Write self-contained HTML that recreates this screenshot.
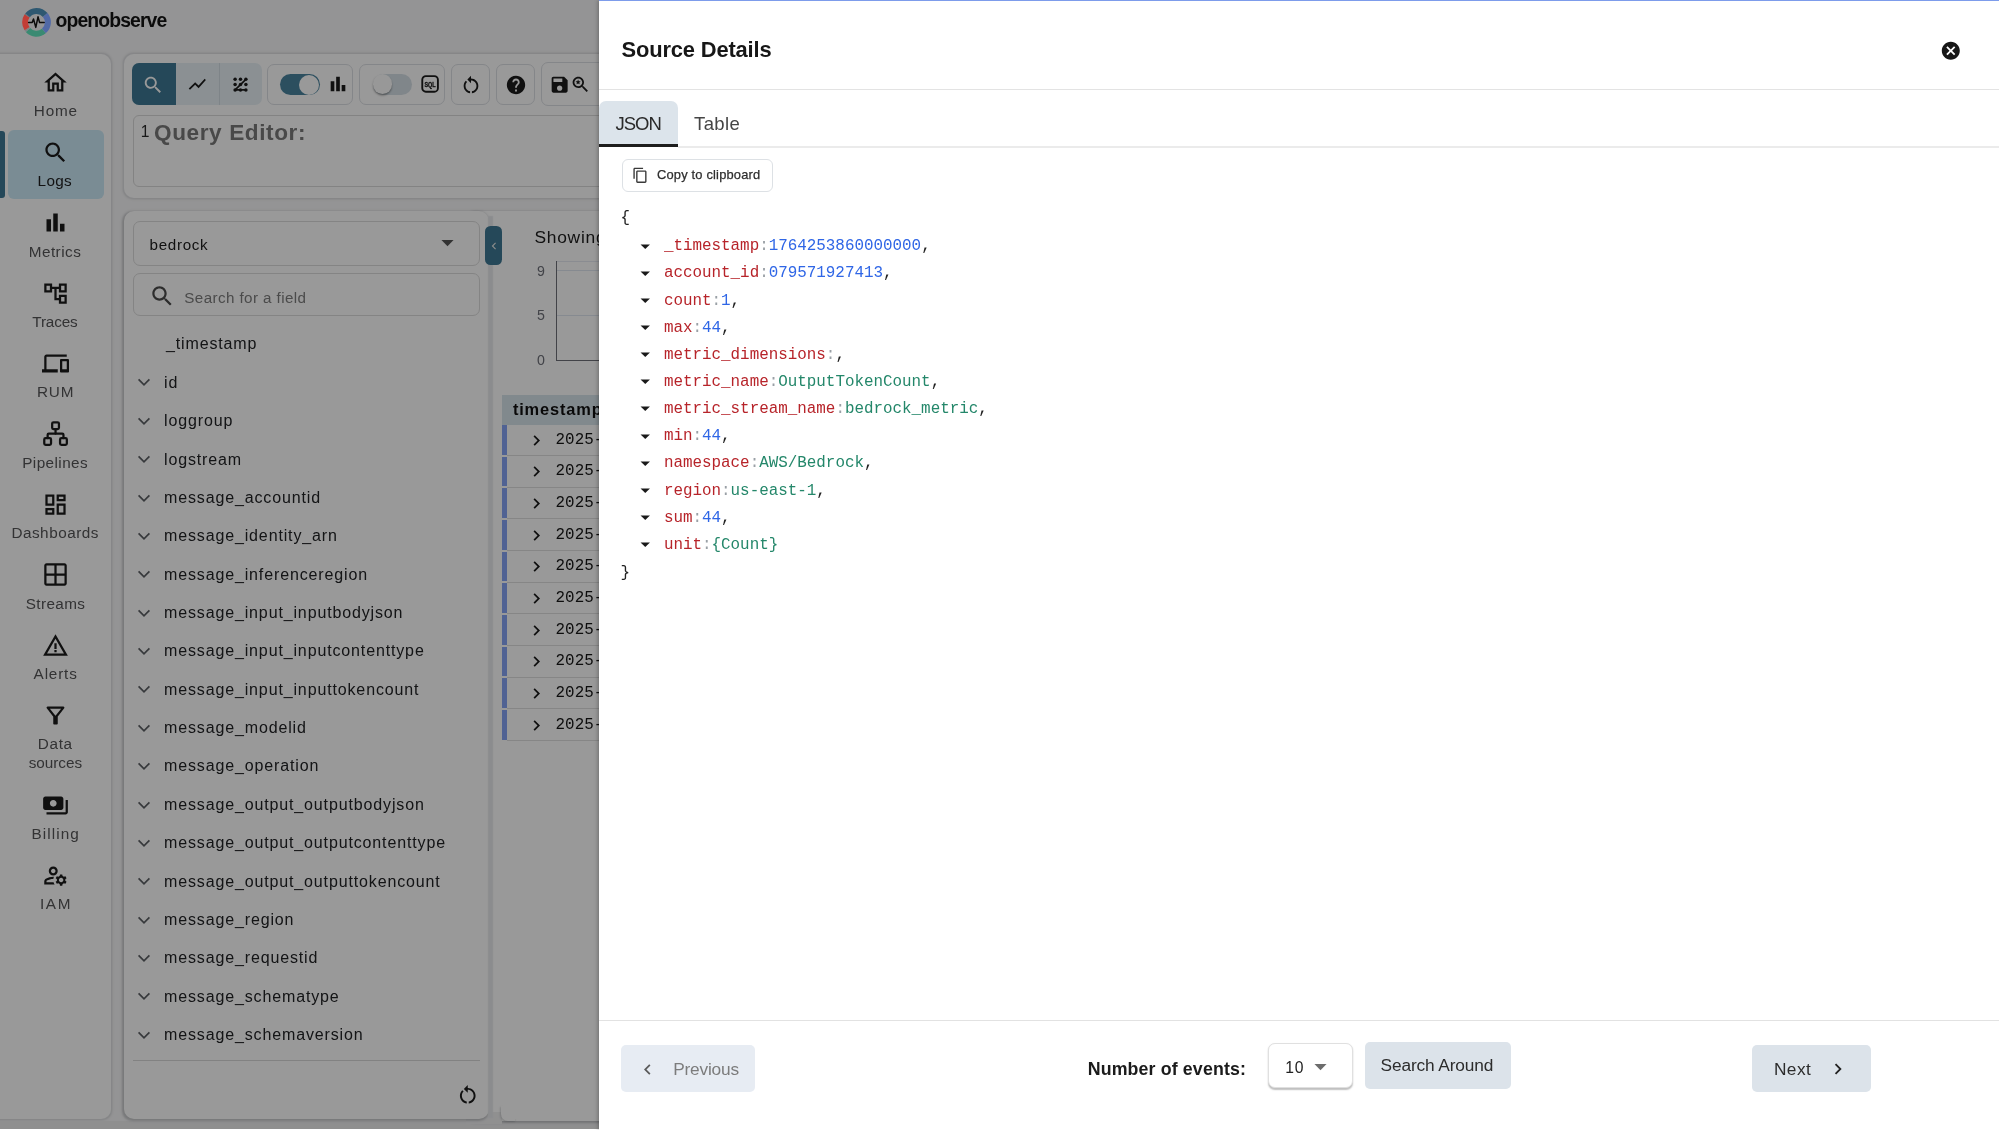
<!DOCTYPE html>
<html lang="en">
<head>
<meta charset="utf-8">
<title>OpenObserve - Source Details</title>
<style>
*{box-sizing:border-box;margin:0;padding:0}
html,body{width:1999px;height:1130px;overflow:hidden;background:#f7f7f8;font-family:"Liberation Sans",sans-serif;color:#1f1f1f}
.abs{position:absolute}
#bg{position:absolute;left:0;top:0;width:1999px;height:1130px;background:#f7f7f8;overflow:hidden}
#ov{position:absolute;left:0;top:0;width:1999px;height:1130px;background:rgba(0,0,0,.4)}
#panel{position:absolute;left:599px;top:0;width:1400px;height:1130px;background:#fff;box-shadow:-1px 0 4px rgba(0,0,0,.28)}
.card{position:absolute;background:#fff;border-radius:10px;}
svg{display:block;position:absolute;overflow:visible}
.t{position:absolute;white-space:nowrap;line-height:1}
#bg,#panel{will-change:transform}
/* json */
.jl{position:absolute;left:664px;font:400 15.88px/1 "Liberation Mono",monospace;white-space:pre;color:#1f1f1f}
.k{color:#b7242a}.s{color:#9aa0a6}.n{color:#2f66e6}.g{color:#24876a}
</style>
</head>
<body>
<div id="bg">
<div class="t" id="logo" style="left:55.50px;top:11.00px;font-size:19.4px;font-weight:700;letter-spacing:-0.891px;color:#151515;">openobserve</div>
<div class="card" style="left:-12px;top:53.5px;width:123px;height:1065px;box-shadow:0 0 0 .6px #e4e5e8,0 0 2.5px 0.6px rgba(60,64,72,.22)"></div>
<div class="abs" style="left:7.8px;top:129.6px;width:95.8px;height:69.3px;border-radius:6px;background:#cbe9f7"></div>
<div class="abs" style="left:0;top:131px;width:4.6px;height:67.3px;background:#3f7994;border-radius:0 3px 3px 0"></div>
<svg viewBox="0 0 24 24" style="left:41.80px;top:68.60px;width:27px;height:27px;fill:#1c1c1c"><path d="M12 5.69l5 4.5V18h-2v-6H9v6H7v-7.81l5-4.5M12 3L2 12h3v8h6v-6h2v6h6v-8h3L12 3z"/></svg>
<div class="t" style="left:33.80px;top:102.90px;font-size:15.3px;font-weight:400;letter-spacing:0.834px;color:#555557;">Home</div>
<svg viewBox="0 0 24 24" style="left:41.80px;top:138.90px;width:27px;height:27px;fill:#1c1c1c"><path d="M15.5 14h-.79l-.28-.27C15.41 12.59 16 11.11 16 9.5 16 5.91 13.09 3 9.5 3S3 5.91 3 9.5 5.91 16 9.5 16c1.61 0 3.09-.59 4.23-1.57l.27.28v.79l5 4.99L20.49 19l-4.99-5zm-6 0C7.01 14 5 11.99 5 9.5S7.01 5 9.5 5 14 7.01 14 9.5 11.99 14 9.5 14z"/></svg>
<div class="t" style="left:37.60px;top:173.20px;font-size:15.3px;font-weight:400;letter-spacing:0.293px;color:#1e1e1e;">Logs</div>
<svg viewBox="0 0 24 24" style="left:41.80px;top:209.30px;width:27px;height:27px;fill:#1c1c1c"><path d="M4 9h4v11H4zm12 4h4v7h-4zm-6-9h4v16h-4z"/></svg>
<div class="t" style="left:28.70px;top:243.60px;font-size:15.3px;font-weight:400;letter-spacing:0.477px;color:#555557;">Metrics</div>
<svg viewBox="0 0 24 24" style="left:41.80px;top:279.70px;width:27px;height:27px;fill:#1c1c1c"><path d="M22 11V3h-7v3H9V3H2v8h7V8h2v10h4v3h7v-8h-7v3h-2V8h2v3h7zM7 9H4V5h3v4zm10 6h3v4h-3v-4zm0-10h3v4h-3V5z"/></svg>
<div class="t" style="left:32.30px;top:314.00px;font-size:15.3px;font-weight:400;letter-spacing:-0.147px;color:#555557;">Traces</div>
<svg viewBox="0 0 24 24" style="left:41.80px;top:350.10px;width:27px;height:27px;fill:#1c1c1c"><path d="M4 6h18V4H4c-1.1 0-2 .9-2 2v11H0v3h14v-3H4V6zm19 2h-6c-.55 0-1 .45-1 1v10c0 .55.45 1 1 1h6c.55 0 1-.45 1-1V9c0-.55-.45-1-1-1zm-1 9h-4v-7h4v7z"/></svg>
<div class="t" style="left:37.00px;top:384.40px;font-size:15.3px;font-weight:400;letter-spacing:0.803px;color:#555557;">RUM</div>
<svg viewBox="0 0 24 24" style="left:41.95px;top:420.45px;width:27.1px;height:27.1px;fill:none;stroke:#1c1c1c;stroke-width:2;stroke-linecap:round;stroke-linejoin:round"><rect x="16" y="16" width="6" height="6" rx="1.2"/><rect x="2" y="16" width="6" height="6" rx="1.2"/><rect x="9" y="2" width="6" height="6" rx="1.2"/><path d="M5 16v-3a1 1 0 0 1 1-1h12a1 1 0 0 1 1 1v3"/><path d="M12 12V8"/></svg>
<div class="t" style="left:22.20px;top:454.80px;font-size:15.3px;font-weight:400;letter-spacing:0.422px;color:#555557;">Pipelines</div>
<svg viewBox="0 0 24 24" style="left:41.80px;top:490.90px;width:27px;height:27px;fill:#1c1c1c"><path d="M19 5v2h-4V5h4M9 5v6H5V5h4m10 8v6h-4v-6h4M9 17v2H5v-2h4M21 3h-8v6h8V3zM11 3H3v10h8V3zm10 8h-8v10h8V11zm-10 4H3v6h8v-6z"/></svg>
<div class="t" style="left:11.40px;top:525.20px;font-size:15.3px;font-weight:400;letter-spacing:0.507px;color:#555557;">Dashboards</div>
<svg viewBox="0 0 24 24" style="left:41.80px;top:561.30px;width:27px;height:27px;fill:#1c1c1c"><path d="M20 2H4c-1.1 0-2 .9-2 2v16c0 1.1.9 2 2 2h16c1.1 0 2-.9 2-2V4c0-1.1-.9-2-2-2zm0 9h-7V4h7v7zm-9-7v7H4V4h7zm-7 9h7v7H4v-7zm9 7v-7h7v7h-7z"/></svg>
<div class="t" style="left:25.80px;top:595.60px;font-size:15.3px;font-weight:400;letter-spacing:0.366px;color:#555557;">Streams</div>
<svg viewBox="0 0 24 24" style="left:41.80px;top:631.70px;width:27px;height:27px;fill:#1c1c1c"><path d="M12 5.99L19.53 19H4.47L12 5.99M12 2L1 21h22L12 2zm1 14h-2v2h2v-2zm0-6h-2v5h2v-5z"/></svg>
<div class="t" style="left:33.60px;top:666.00px;font-size:15.3px;font-weight:400;letter-spacing:0.829px;color:#555557;">Alerts</div>
<svg viewBox="0 0 24 24" style="left:41.80px;top:702.10px;width:27px;height:27px;fill:#1c1c1c"><path d="M7 6h10l-5.01 6.3L7 6zm-2.75-.39C6.27 8.2 10 13 10 13v6c0 .55.45 1 1 1h2c.55 0 1-.45 1-1v-6s3.72-4.8 5.74-7.39c.51-.66.04-1.61-.79-1.61H5.04c-.83 0-1.3.95-.79 1.61z"/></svg>
<div class="t" style="left:37.70px;top:736.40px;font-size:15.3px;font-weight:400;letter-spacing:0.699px;color:#555557;">Data</div>
<div class="t" style="left:28.70px;top:755.40px;font-size:15.3px;font-weight:400;letter-spacing:-0.036px;color:#555557;">sources</div>
<svg viewBox="0 0 24 24" style="left:41.80px;top:791.50px;width:27px;height:27px;fill:#1c1c1c"><path d="M19 14V6c0-1.1-.9-2-2-2H3c-1.1 0-2 .9-2 2v8c0 1.1.9 2 2 2h14c1.1 0 2-.9 2-2zm-9-1c-1.66 0-3-1.34-3-3s1.34-3 3-3 3 1.34 3 3-1.34 3-3 3zm13-6v11c0 1.1-.9 2-2 2H4v-2h17V7h2z"/></svg>
<div class="t" style="left:31.50px;top:825.80px;font-size:15.3px;font-weight:400;letter-spacing:1.066px;color:#555557;">Billing</div>
<svg viewBox="0 0 24 24" style="left:41.80px;top:861.90px;width:27px;height:27px;fill:#1c1c1c"><path d="M4 18v-.65c0-.34.16-.66.41-.81C6.1 15.53 8.03 15 10 15c.03 0 .05 0 .08.01.1-.7.3-1.37.59-1.98-.22-.02-.44-.03-.67-.03-2.42 0-4.68.67-6.61 1.82-.88.52-1.39 1.5-1.39 2.53V20h9.26c-.42-.6-.75-1.28-.97-2H4zm6-6c2.21 0 4-1.79 4-4s-1.79-4-4-4-4 1.79-4 4 1.79 4 4 4zm0-6c1.1 0 2 .9 2 2s-.9 2-2 2-2-.9-2-2 .9-2 2-2zm10.75 10c0-.22-.03-.42-.06-.63l1.14-1.01-1-1.73-1.45.49c-.32-.27-.68-.48-1.08-.63L18 11h-2l-.3 1.49c-.4.15-.76.36-1.08.63l-1.45-.49-1 1.73 1.14 1.01c-.03.21-.06.41-.06.63s.03.42.06.63l-1.14 1.01 1 1.73 1.45-.49c.32.27.68.48 1.08.63L16 21h2l.3-1.49c.4-.15.76-.36 1.08-.63l1.45.49 1-1.73-1.14-1.01c.03-.21.06-.41.06-.63zM17 18c-1.1 0-2-.9-2-2s.9-2 2-2 2 .9 2 2-.9 2-2 2z"/></svg>
<div class="t" style="left:40.00px;top:896.20px;font-size:15.3px;font-weight:400;letter-spacing:1.624px;color:#555557;">IAM</div>
<div class="card" style="left:123.5px;top:54px;width:1900px;height:143.5px;box-shadow:0 0 0 .6px #e4e5e8,0 0 2.5px 0.6px rgba(60,64,72,.22)"></div>
<div class="abs" style="left:132.4px;top:63.4px;width:129.5px;height:41.8px;border-radius:7px;background:#e8f1f6;overflow:hidden"><div class="abs" style="left:0;top:0;width:43.6px;height:42px;background:#3f7994"></div><div class="abs" style="left:86.3px;top:0;width:1.3px;height:42px;background:#d3dde3"></div></div>
<svg viewBox="0 0 24 24" style="left:142.00px;top:73.80px;width:22.2px;height:22.2px;fill:#ffffff"><path d="M15.5 14h-.79l-.28-.27C15.41 12.59 16 11.11 16 9.5 16 5.91 13.09 3 9.5 3S3 5.91 3 9.5 5.91 16 9.5 16c1.61 0 3.09-.59 4.23-1.57l.27.28v.79l5 4.99L20.49 19l-4.99-5zm-6 0C7.01 14 5 11.99 5 9.5S7.01 5 9.5 5 14 7.01 14 9.5 11.99 14 9.5 14z"/></svg>
<svg viewBox="0 0 24 24" style="left:186.70px;top:74.10px;width:20.6px;height:20.6px;fill:#1c1c1c"><path d="M3.5 18.49l6-6.01 4 4L22 6.92l-1.41-1.41-7.09 7.97-4-4L2 16.99z"/></svg>
<svg viewBox="0 0 300 120" style="left:0;top:0;width:300px;height:120px;fill:#1c1c1c"><circle cx="235.1" cy="79.3" r="1.75"/><circle cx="235.1" cy="84.6" r="1.75"/><circle cx="235.1" cy="89.9" r="1.75"/><circle cx="240.5" cy="79.3" r="1.75"/><circle cx="240.5" cy="84.6" r="1.75"/><circle cx="240.5" cy="89.9" r="1.75"/><circle cx="245.9" cy="79.3" r="1.75"/><circle cx="245.9" cy="84.6" r="1.75"/><circle cx="245.9" cy="89.9" r="1.75"/><path d="M245.9 79.3L235.1 89.9H245.9" stroke="#1c1c1c" stroke-width="1.7" fill="none" stroke-linejoin="round"/></svg>
<div class="abs" style="left:267.3px;top:63.5px;width:85.4px;height:41.4px;border:1.2px solid #dde0e4;border-radius:7px;background:transparent;"></div>
<div class="abs" style="left:280.1px;top:74.2px;width:39.6px;height:21px;border-radius:11px;background:#4a849f"></div>
<div class="abs" style="left:299.1px;top:74.8px;width:19.6px;height:19.8px;border-radius:10px;background:#fff"></div>
<svg viewBox="0 0 24 24" style="left:327.30px;top:72.90px;width:22px;height:22px;fill:#1c1c1c"><path d="M4 9h4v11H4zm12 4h4v7h-4zm-6-9h4v16h-4z"/></svg>
<div class="abs" style="left:359.4px;top:63.5px;width:85.4px;height:41.4px;border:1.2px solid #dde0e4;border-radius:7px;background:transparent;"></div>
<div class="abs" style="left:372.5px;top:74.4px;width:39px;height:20.4px;border-radius:11px;background:#d6e0e7"></div>
<div class="abs" style="left:372.9px;top:74.4px;width:19.4px;height:19.6px;border-radius:10px;background:#fdfdfd;box-shadow:0 1.5px 2px rgba(0,0,0,.35)"></div>
<svg viewBox="0 0 18 18" style="left:421px;top:75.4px;width:18.2px;height:17.8px"><rect x="1.1" y="1.1" width="15.8" height="15.8" rx="3.6" fill="none" stroke="#1c1c1c" stroke-width="1.9"/><text x="9" y="12" text-anchor="middle" font-family="Liberation Sans,sans-serif" font-weight="700" font-size="7.8" fill="#1c1c1c" stroke="#1c1c1c" stroke-width=".35" textLength="11.4" lengthAdjust="spacingAndGlyphs">SQL</text></svg>
<div class="abs" style="left:451.2px;top:63.5px;width:38.4px;height:41.4px;border:1.2px solid #dde0e4;border-radius:7px;background:transparent;"></div>
<svg viewBox="0 0 24 24" style="left:459.80px;top:74.40px;width:22px;height:22px;fill:#1c1c1c"><path d="M12 5V2L8 6l4 4V7c3.31 0 6 2.69 6 6 0 2.97-2.17 5.43-5 5.91v2.02c3.95-.49 7-3.85 7-7.93 0-4.42-3.58-8-8-8zm-6 8c0-1.65.67-3.15 1.76-4.24L6.34 7.34C4.9 8.79 4 10.79 4 13c0 4.08 3.05 7.44 7 7.93v-2.02c-2.83-.48-5-2.94-5-5.91z"/></svg>
<div class="abs" style="left:496.2px;top:63.5px;width:38.8px;height:41.4px;border:1.2px solid #dde0e4;border-radius:7px;background:transparent;"></div>
<svg viewBox="0 0 24 24" style="left:504.80px;top:73.60px;width:22px;height:22px;fill:#1c1c1c"><path d="M12 2C6.48 2 2 6.48 2 12s4.48 10 10 10 10-4.48 10-10S17.52 2 12 2zm1 17h-2v-2h2v2zm2.07-7.75l-.9.92C13.45 12.9 13 13.5 13 15h-2v-.5c0-1.1.45-2.1 1.17-2.83l1.24-1.26c.37-.36.59-.86.59-1.41 0-1.1-.9-2-2-2s-2 .9-2 2H8c0-2.21 1.79-4 4-4s4 1.79 4 4c0 .88-.36 1.68-.93 2.25z"/></svg>
<div class="abs" style="left:541.2px;top:62.3px;width:120px;height:44px;border:1.2px solid #dde0e4;border-radius:7px;background:transparent;"></div>
<svg viewBox="0 0 24 24" style="left:548.95px;top:74.15px;width:21.3px;height:21.3px;fill:#1c1c1c"><path d="M17 3H5c-1.11 0-2 .9-2 2v14c0 1.1.89 2 2 2h14c1.1 0 2-.9 2-2V7l-4-4zm-5 16c-1.66 0-3-1.34-3-3s1.34-3 3-3 3 1.34 3 3-1.34 3-3 3zm3-10H5V5h10v4z"/></svg>
<svg viewBox="0 0 24 24" style="left:570.10px;top:73.90px;width:21px;height:21px;fill:#1c1c1c"><path d="M15.5 14h-.79l-.28-.27C15.41 12.59 16 11.11 16 9.5 16 5.91 13.09 3 9.5 3S3 5.91 3 9.5 5.91 16 9.5 16c1.61 0 3.09-.59 4.23-1.57l.27.28v.79l5 4.99L20.49 19l-4.99-5zm-6 0C7.01 14 5 11.99 5 9.5S7.01 5 9.5 5 14 7.01 14 9.5 11.99 14 9.5 14z"/></svg>
<svg viewBox="0 0 24 24" style="left:575.30px;top:78.90px;width:6.2px;height:6.2px;fill:#1c1c1c"><path d="M12 2l2.9 6.3 6.9.8-5.1 4.7 1.4 6.8L12 17.2 5.9 20.6l1.4-6.8L2.2 9.1l6.9-.8z"/></svg>
<div class="abs" style="left:132.5px;top:115px;width:1860px;height:72px;border:1.2px solid #dadada;border-radius:6px;background:transparent;"></div>
<div class="t" style="left:140.70px;top:123.50px;font-size:15.6px;font-weight:400;letter-spacing:0.000px;color:#2a2a2a;">1</div>
<div class="t" id="qe" style="left:154.00px;top:121.50px;font-size:22.6px;font-weight:700;letter-spacing:0.596px;color:#7a7a7a;">Query Editor:</div>
<div class="abs" style="left:0;top:1121px;width:700px;height:9px;background:#eeeeef"></div>
<div class="card" style="left:470px;top:211px;width:1532px;height:910px;border-radius:6px;box-shadow:-.8px 1px 2.2px .3px rgba(60,64,72,.26)"></div>
<div class="abs" style="left:466px;top:1112px;width:35.5px;height:12px;background:#f0f0f1"></div>
<div class="abs" style="left:501px;top:1106px;width:14px;height:15px;background:#fff;border-radius:0 0 0 7px;box-shadow:-.8px 1px 2px rgba(60,64,72,.2)"></div>
<div class="abs" style="left:503px;top:1100px;width:14px;height:19px;background:#fff"></div>
<div class="card" style="left:123.8px;top:211px;width:365px;height:907.5px;box-shadow:-.8px 1px 2.2px .3px rgba(60,64,72,.26)"></div>
<div class="abs" style="left:489.2px;top:217px;width:2.6px;height:900px;background:#e8eaed;box-shadow:0 0 1.3px 1px #e8eaed"></div>
<div class="abs" style="left:132.8px;top:220.5px;width:346.8px;height:45.6px;border:1.2px solid #dcdcdc;border-radius:7px;background:transparent;"></div>
<div class="t" id="bedrock" style="left:149.60px;top:236.50px;font-size:15.2px;font-weight:400;letter-spacing:0.660px;color:#1c1c1c;">bedrock</div>
<svg viewBox="0 0 24 24" style="left:433.00px;top:228.10px;width:29px;height:29px;fill:#555"><path d="M7 10l5 5 5-5z"/></svg>
<div class="abs" style="left:132.8px;top:272.6px;width:346.8px;height:43.6px;border:1.2px solid #dcdcdc;border-radius:7px;background:transparent;"></div>
<svg viewBox="0 0 24 24" style="left:148.95px;top:283.35px;width:26.5px;height:26.5px;fill:#4a4a4a"><path d="M15.5 14h-.79l-.28-.27C15.41 12.59 16 11.11 16 9.5 16 5.91 13.09 3 9.5 3S3 5.91 3 9.5 5.91 16 9.5 16c1.61 0 3.09-.59 4.23-1.57l.27.28v.79l5 4.99L20.49 19l-4.99-5zm-6 0C7.01 14 5 11.99 5 9.5S7.01 5 9.5 5 14 7.01 14 9.5 11.99 14 9.5 14z"/></svg>
<div class="t" id="sff" style="left:184.30px;top:289.50px;font-size:15.2px;font-weight:400;letter-spacing:0.408px;color:#7d7d7d;">Search for a field</div>
<div class="t" style="left:166.00px;top:336.40px;font-size:16px;font-weight:400;letter-spacing:0.860px;color:#222326;">_timestamp</div>
<svg viewBox="0 0 14 9" style="left:137px;top:378.47px;width:14px;height:9px;fill:none;stroke:#5d6064;stroke-width:1.7;stroke-linejoin:miter"><path d="M1.6 1.4L7 6.9L12.4 1.4"/></svg>
<div class="t" style="left:164.00px;top:374.77px;font-size:16px;font-weight:400;letter-spacing:0.860px;color:#222326;">id</div>
<svg viewBox="0 0 14 9" style="left:137px;top:416.84px;width:14px;height:9px;fill:none;stroke:#5d6064;stroke-width:1.7;stroke-linejoin:miter"><path d="M1.6 1.4L7 6.9L12.4 1.4"/></svg>
<div class="t" style="left:164.00px;top:413.14px;font-size:16px;font-weight:400;letter-spacing:0.860px;color:#222326;">loggroup</div>
<svg viewBox="0 0 14 9" style="left:137px;top:455.21px;width:14px;height:9px;fill:none;stroke:#5d6064;stroke-width:1.7;stroke-linejoin:miter"><path d="M1.6 1.4L7 6.9L12.4 1.4"/></svg>
<div class="t" style="left:164.00px;top:451.51px;font-size:16px;font-weight:400;letter-spacing:0.860px;color:#222326;">logstream</div>
<svg viewBox="0 0 14 9" style="left:137px;top:493.58px;width:14px;height:9px;fill:none;stroke:#5d6064;stroke-width:1.7;stroke-linejoin:miter"><path d="M1.6 1.4L7 6.9L12.4 1.4"/></svg>
<div class="t" style="left:164.00px;top:489.88px;font-size:16px;font-weight:400;letter-spacing:0.860px;color:#222326;">message_accountid</div>
<svg viewBox="0 0 14 9" style="left:137px;top:531.95px;width:14px;height:9px;fill:none;stroke:#5d6064;stroke-width:1.7;stroke-linejoin:miter"><path d="M1.6 1.4L7 6.9L12.4 1.4"/></svg>
<div class="t" style="left:164.00px;top:528.25px;font-size:16px;font-weight:400;letter-spacing:0.860px;color:#222326;">message_identity_arn</div>
<svg viewBox="0 0 14 9" style="left:137px;top:570.32px;width:14px;height:9px;fill:none;stroke:#5d6064;stroke-width:1.7;stroke-linejoin:miter"><path d="M1.6 1.4L7 6.9L12.4 1.4"/></svg>
<div class="t" style="left:164.00px;top:566.62px;font-size:16px;font-weight:400;letter-spacing:0.860px;color:#222326;">message_inferenceregion</div>
<svg viewBox="0 0 14 9" style="left:137px;top:608.69px;width:14px;height:9px;fill:none;stroke:#5d6064;stroke-width:1.7;stroke-linejoin:miter"><path d="M1.6 1.4L7 6.9L12.4 1.4"/></svg>
<div class="t" style="left:164.00px;top:604.99px;font-size:16px;font-weight:400;letter-spacing:0.860px;color:#222326;">message_input_inputbodyjson</div>
<svg viewBox="0 0 14 9" style="left:137px;top:647.06px;width:14px;height:9px;fill:none;stroke:#5d6064;stroke-width:1.7;stroke-linejoin:miter"><path d="M1.6 1.4L7 6.9L12.4 1.4"/></svg>
<div class="t" style="left:164.00px;top:643.36px;font-size:16px;font-weight:400;letter-spacing:0.860px;color:#222326;">message_input_inputcontenttype</div>
<svg viewBox="0 0 14 9" style="left:137px;top:685.43px;width:14px;height:9px;fill:none;stroke:#5d6064;stroke-width:1.7;stroke-linejoin:miter"><path d="M1.6 1.4L7 6.9L12.4 1.4"/></svg>
<div class="t" style="left:164.00px;top:681.73px;font-size:16px;font-weight:400;letter-spacing:0.860px;color:#222326;">message_input_inputtokencount</div>
<svg viewBox="0 0 14 9" style="left:137px;top:723.80px;width:14px;height:9px;fill:none;stroke:#5d6064;stroke-width:1.7;stroke-linejoin:miter"><path d="M1.6 1.4L7 6.9L12.4 1.4"/></svg>
<div class="t" style="left:164.00px;top:720.10px;font-size:16px;font-weight:400;letter-spacing:0.860px;color:#222326;">message_modelid</div>
<svg viewBox="0 0 14 9" style="left:137px;top:762.17px;width:14px;height:9px;fill:none;stroke:#5d6064;stroke-width:1.7;stroke-linejoin:miter"><path d="M1.6 1.4L7 6.9L12.4 1.4"/></svg>
<div class="t" style="left:164.00px;top:758.47px;font-size:16px;font-weight:400;letter-spacing:0.860px;color:#222326;">message_operation</div>
<svg viewBox="0 0 14 9" style="left:137px;top:800.54px;width:14px;height:9px;fill:none;stroke:#5d6064;stroke-width:1.7;stroke-linejoin:miter"><path d="M1.6 1.4L7 6.9L12.4 1.4"/></svg>
<div class="t" style="left:164.00px;top:796.84px;font-size:16px;font-weight:400;letter-spacing:0.860px;color:#222326;">message_output_outputbodyjson</div>
<svg viewBox="0 0 14 9" style="left:137px;top:838.91px;width:14px;height:9px;fill:none;stroke:#5d6064;stroke-width:1.7;stroke-linejoin:miter"><path d="M1.6 1.4L7 6.9L12.4 1.4"/></svg>
<div class="t" style="left:164.00px;top:835.21px;font-size:16px;font-weight:400;letter-spacing:0.860px;color:#222326;">message_output_outputcontenttype</div>
<svg viewBox="0 0 14 9" style="left:137px;top:877.28px;width:14px;height:9px;fill:none;stroke:#5d6064;stroke-width:1.7;stroke-linejoin:miter"><path d="M1.6 1.4L7 6.9L12.4 1.4"/></svg>
<div class="t" style="left:164.00px;top:873.58px;font-size:16px;font-weight:400;letter-spacing:0.860px;color:#222326;">message_output_outputtokencount</div>
<svg viewBox="0 0 14 9" style="left:137px;top:915.65px;width:14px;height:9px;fill:none;stroke:#5d6064;stroke-width:1.7;stroke-linejoin:miter"><path d="M1.6 1.4L7 6.9L12.4 1.4"/></svg>
<div class="t" style="left:164.00px;top:911.95px;font-size:16px;font-weight:400;letter-spacing:0.860px;color:#222326;">message_region</div>
<svg viewBox="0 0 14 9" style="left:137px;top:954.02px;width:14px;height:9px;fill:none;stroke:#5d6064;stroke-width:1.7;stroke-linejoin:miter"><path d="M1.6 1.4L7 6.9L12.4 1.4"/></svg>
<div class="t" style="left:164.00px;top:950.32px;font-size:16px;font-weight:400;letter-spacing:0.860px;color:#222326;">message_requestid</div>
<svg viewBox="0 0 14 9" style="left:137px;top:992.39px;width:14px;height:9px;fill:none;stroke:#5d6064;stroke-width:1.7;stroke-linejoin:miter"><path d="M1.6 1.4L7 6.9L12.4 1.4"/></svg>
<div class="t" style="left:164.00px;top:988.69px;font-size:16px;font-weight:400;letter-spacing:0.860px;color:#222326;">message_schematype</div>
<svg viewBox="0 0 14 9" style="left:137px;top:1030.76px;width:14px;height:9px;fill:none;stroke:#5d6064;stroke-width:1.7;stroke-linejoin:miter"><path d="M1.6 1.4L7 6.9L12.4 1.4"/></svg>
<div class="t" style="left:164.00px;top:1027.06px;font-size:16px;font-weight:400;letter-spacing:0.860px;color:#222326;">message_schemaversion</div>
<div class="abs" style="left:132.5px;top:1060.4px;width:347px;height:1px;background:#d9d9d9"></div>
<svg viewBox="0 0 24 24" style="left:455.85px;top:1083.45px;width:23.5px;height:23.5px;fill:#1c1c1c"><path d="M12 5V2L8 6l4 4V7c3.31 0 6 2.69 6 6 0 2.97-2.17 5.43-5 5.91v2.02c3.95-.49 7-3.85 7-7.93 0-4.42-3.58-8-8-8zm-6 8c0-1.65.67-3.15 1.76-4.24L6.34 7.34C4.9 8.79 4 10.79 4 13c0 4.08 3.05 7.44 7 7.93v-2.02c-2.83-.48-5-2.94-5-5.91z"/></svg>
<div class="abs" style="left:485.3px;top:226px;width:17.1px;height:39.3px;border-radius:5.5px;background:#3f7994"></div>
<svg viewBox="0 0 24 24" style="left:486.60px;top:238.80px;width:14px;height:14px;fill:#e8e8e8"><path d="M15.41 7.41L14 6l-6 6 6 6 1.41-1.41L10.83 12z"/></svg>
<div class="t" id="showing" style="left:534.40px;top:229.20px;font-size:17.4px;font-weight:400;letter-spacing:0.750px;color:#1c1c1c;">Showing</div>
<div class="t" style="left:537.10px;top:263.80px;font-size:14.2px;font-weight:400;letter-spacing:0.000px;color:#6e7079;">9</div>
<div class="abs" style="left:557px;top:270.2px;width:60px;height:1px;background:#e0e6f1"></div>
<div class="t" style="left:537.10px;top:308.20px;font-size:14.2px;font-weight:400;letter-spacing:0.000px;color:#6e7079;">5</div>
<div class="abs" style="left:557px;top:314.6px;width:60px;height:1px;background:#e0e6f1"></div>
<div class="t" style="left:537.10px;top:353.10px;font-size:14.2px;font-weight:400;letter-spacing:0.000px;color:#6e7079;">0</div>
<div class="abs" style="left:557px;top:261px;width:60px;height:1px;background:#e6eaf2"></div>
<div class="abs" style="left:555.9px;top:260.8px;width:1.2px;height:100px;background:#6e7079"></div>
<div class="abs" style="left:555.9px;top:359.8px;width:60px;height:1.2px;background:#6e7079"></div>
<div class="abs" style="left:502px;top:395px;width:120px;height:29.8px;background:#d8e4ec"></div>
<div class="t" id="tsh" style="left:512.90px;top:401.30px;font-size:16.4px;font-weight:700;letter-spacing:0.850px;color:#101010;">timestamp</div>
<div class="abs" style="left:507px;top:455.0px;width:110px;height:1px;background:#e0e0e0"></div>
<div class="abs" style="left:502px;top:424.8px;width:5px;height:29.8px;background:#85a3f5"></div>
<svg viewBox="0 0 24 24" style="left:526.10px;top:429.50px;width:21px;height:21px;fill:#1a1a1a"><path d="M10 6L8.59 7.41 13.17 12l-4.58 4.59L10 18l6-6z"/></svg>
<div class="t" style="left:555.60px;top:432.80px;font-size:15.88px;font-weight:400;letter-spacing:0.000px;color:#161616;font-family:'Liberation Mono',monospace;">2025-</div>
<div class="abs" style="left:507px;top:486.7px;width:110px;height:1px;background:#e0e0e0"></div>
<div class="abs" style="left:502px;top:456.5px;width:5px;height:29.8px;background:#85a3f5"></div>
<svg viewBox="0 0 24 24" style="left:526.10px;top:461.17px;width:21px;height:21px;fill:#1a1a1a"><path d="M10 6L8.59 7.41 13.17 12l-4.58 4.59L10 18l6-6z"/></svg>
<div class="t" style="left:555.60px;top:464.47px;font-size:15.88px;font-weight:400;letter-spacing:0.000px;color:#161616;font-family:'Liberation Mono',monospace;">2025-</div>
<div class="abs" style="left:507px;top:518.3px;width:110px;height:1px;background:#e0e0e0"></div>
<div class="abs" style="left:502px;top:488.1px;width:5px;height:29.8px;background:#85a3f5"></div>
<svg viewBox="0 0 24 24" style="left:526.10px;top:492.84px;width:21px;height:21px;fill:#1a1a1a"><path d="M10 6L8.59 7.41 13.17 12l-4.58 4.59L10 18l6-6z"/></svg>
<div class="t" style="left:555.60px;top:496.14px;font-size:15.88px;font-weight:400;letter-spacing:0.000px;color:#161616;font-family:'Liberation Mono',monospace;">2025-</div>
<div class="abs" style="left:507px;top:550.0px;width:110px;height:1px;background:#e0e0e0"></div>
<div class="abs" style="left:502px;top:519.8px;width:5px;height:29.8px;background:#85a3f5"></div>
<svg viewBox="0 0 24 24" style="left:526.10px;top:524.51px;width:21px;height:21px;fill:#1a1a1a"><path d="M10 6L8.59 7.41 13.17 12l-4.58 4.59L10 18l6-6z"/></svg>
<div class="t" style="left:555.60px;top:527.81px;font-size:15.88px;font-weight:400;letter-spacing:0.000px;color:#161616;font-family:'Liberation Mono',monospace;">2025-</div>
<div class="abs" style="left:507px;top:581.7px;width:110px;height:1px;background:#e0e0e0"></div>
<div class="abs" style="left:502px;top:551.5px;width:5px;height:29.8px;background:#85a3f5"></div>
<svg viewBox="0 0 24 24" style="left:526.10px;top:556.18px;width:21px;height:21px;fill:#1a1a1a"><path d="M10 6L8.59 7.41 13.17 12l-4.58 4.59L10 18l6-6z"/></svg>
<div class="t" style="left:555.60px;top:559.48px;font-size:15.88px;font-weight:400;letter-spacing:0.000px;color:#161616;font-family:'Liberation Mono',monospace;">2025-</div>
<div class="abs" style="left:507px;top:613.4px;width:110px;height:1px;background:#e0e0e0"></div>
<div class="abs" style="left:502px;top:583.2px;width:5px;height:29.8px;background:#85a3f5"></div>
<svg viewBox="0 0 24 24" style="left:526.10px;top:587.85px;width:21px;height:21px;fill:#1a1a1a"><path d="M10 6L8.59 7.41 13.17 12l-4.58 4.59L10 18l6-6z"/></svg>
<div class="t" style="left:555.60px;top:591.15px;font-size:15.88px;font-weight:400;letter-spacing:0.000px;color:#161616;font-family:'Liberation Mono',monospace;">2025-</div>
<div class="abs" style="left:507px;top:645.0px;width:110px;height:1px;background:#e0e0e0"></div>
<div class="abs" style="left:502px;top:614.8px;width:5px;height:29.8px;background:#85a3f5"></div>
<svg viewBox="0 0 24 24" style="left:526.10px;top:619.52px;width:21px;height:21px;fill:#1a1a1a"><path d="M10 6L8.59 7.41 13.17 12l-4.58 4.59L10 18l6-6z"/></svg>
<div class="t" style="left:555.60px;top:622.82px;font-size:15.88px;font-weight:400;letter-spacing:0.000px;color:#161616;font-family:'Liberation Mono',monospace;">2025-</div>
<div class="abs" style="left:507px;top:676.7px;width:110px;height:1px;background:#e0e0e0"></div>
<div class="abs" style="left:502px;top:646.5px;width:5px;height:29.8px;background:#85a3f5"></div>
<svg viewBox="0 0 24 24" style="left:526.10px;top:651.19px;width:21px;height:21px;fill:#1a1a1a"><path d="M10 6L8.59 7.41 13.17 12l-4.58 4.59L10 18l6-6z"/></svg>
<div class="t" style="left:555.60px;top:654.49px;font-size:15.88px;font-weight:400;letter-spacing:0.000px;color:#161616;font-family:'Liberation Mono',monospace;">2025-</div>
<div class="abs" style="left:507px;top:708.4px;width:110px;height:1px;background:#e0e0e0"></div>
<div class="abs" style="left:502px;top:678.2px;width:5px;height:29.8px;background:#85a3f5"></div>
<svg viewBox="0 0 24 24" style="left:526.10px;top:682.86px;width:21px;height:21px;fill:#1a1a1a"><path d="M10 6L8.59 7.41 13.17 12l-4.58 4.59L10 18l6-6z"/></svg>
<div class="t" style="left:555.60px;top:686.16px;font-size:15.88px;font-weight:400;letter-spacing:0.000px;color:#161616;font-family:'Liberation Mono',monospace;">2025-</div>
<div class="abs" style="left:507px;top:740.0px;width:110px;height:1px;background:#e0e0e0"></div>
<div class="abs" style="left:502px;top:709.8px;width:5px;height:29.8px;background:#85a3f5"></div>
<svg viewBox="0 0 24 24" style="left:526.10px;top:714.53px;width:21px;height:21px;fill:#1a1a1a"><path d="M10 6L8.59 7.41 13.17 12l-4.58 4.59L10 18l6-6z"/></svg>
<div class="t" style="left:555.60px;top:717.83px;font-size:15.88px;font-weight:400;letter-spacing:0.000px;color:#161616;font-family:'Liberation Mono',monospace;">2025-</div>
</div>
<div id="ov"></div>
<svg viewBox="0 0 60 45" style="left:0;top:0;width:60px;height:45px"><path d="M27.52 15.28A11.4 11.4 0 0 1 45.23 14.97" fill="none" stroke="#2e5871" stroke-width="6"/><path d="M45.23 14.97A11.4 11.4 0 0 1 43.83 31.03" fill="none" stroke="#5169a6" stroke-width="6"/><path d="M43.83 31.03A11.4 11.4 0 0 1 28.03 29.93" fill="none" stroke="#3a8a72" stroke-width="6"/><path d="M28.03 29.93A11.4 11.4 0 0 1 27.05 28.67" fill="none" stroke="#7d8286" stroke-width="6"/><path d="M27.05 28.67A11.4 11.4 0 0 1 27.05 15.93" fill="none" stroke="#c23d36" stroke-width="6"/><path d="M27.05 15.93A11.4 11.4 0 0 1 27.52 15.28" fill="none" stroke="#5d6b74" stroke-width="6"/><path d="M28.6 22.6h3.6l1.3-3.6 2.3 8.4 2.2-10.6 1.6 5.8h4.6" fill="none" stroke="#0b0b0b" stroke-width="1.5" stroke-linejoin="round" stroke-linecap="round"/></svg>
<div class="abs" style="left:0;top:1128.9px;width:599px;height:1.1px;background:#fff"></div>
<div id="panel">
<div class="abs" style="left:0;top:0;width:1400px;height:1.4px;background:#7d9ceb"></div>
<div class="t" id="title" style="left:22.50px;top:39.00px;font-size:21.9px;font-weight:700;letter-spacing:-0.147px;color:#171717;">Source Details</div>
<svg viewBox="0 0 24 24" style="left:1340.50px;top:39.50px;width:21.6px;height:21.6px;fill:#171717"><path d="M12 2C6.47 2 2 6.47 2 12s4.47 10 10 10 10-4.47 10-10S17.53 2 12 2zm5 13.59L15.59 17 12 13.41 8.41 17 7 15.59 10.59 12 7 8.41 8.41 7 12 10.59 15.59 7 17 8.41 13.41 12 17 15.59z"/></svg>
<div class="abs" style="left:0;top:88.6px;width:1400px;height:1.2px;background:#e3e3e3"></div>
<div class="abs" style="left:0;top:100.5px;width:79px;height:46px;border-radius:7px 7px 0 0;background:#dce4eb"></div>
<div class="abs" style="left:0;top:143.5px;width:79px;height:3px;background:#1d1d1d"></div>
<div class="abs" style="left:79px;top:146.4px;width:1321px;height:1.2px;background:#ebebeb"></div>
<div class="t" id="tjson" style="left:16.50px;top:114.50px;font-size:18.5px;font-weight:400;letter-spacing:-0.993px;color:#2a2a2a;">JSON</div>
<div class="t" id="ttable" style="left:95.00px;top:114.50px;font-size:18.5px;font-weight:400;letter-spacing:0.391px;color:#454545;">Table</div>
<div class="abs" style="left:22.5px;top:159px;width:151px;height:32.5px;border:1.2px solid #dde1e5;border-radius:6px;background:#fff"></div>
<svg viewBox="0 0 24 24" style="left:33.10px;top:166.90px;width:16.6px;height:16.6px;fill:#3a3a3a"><path d="M16 1H4c-1.1 0-2 .9-2 2v14h2V3h12V1zm3 4H8c-1.1 0-2 .9-2 2v14c0 1.1.9 2 2 2h11c1.1 0 2-.9 2-2V7c0-1.1-.9-2-2-2zm0 16H8V7h11v14z"/></svg>
<div class="t" id="copy" style="left:58.00px;top:169.00px;font-size:12.9px;font-weight:400;letter-spacing:0.178px;color:#2e2e2e;-webkit-text-stroke:.25px #2e2e2e;">Copy to clipboard</div>
<div class="t" style="left:21.60px;top:211.40px;font-size:15.88px;font-weight:400;letter-spacing:0.000px;color:#222;font-family:'Liberation Mono',monospace;">{</div>
<svg viewBox="0 0 24 24" style="left:34.75px;top:234.55px;width:22.5px;height:22.5px;fill:#1a1a1a"><path d="M7 10l5 5 5-5z"/></svg>
<div class="jl" style="left:64.89999999999998px;top:239.30px"><span class="k">_timestamp</span><span class="s">:</span><span class="n">1764253860000000</span>,</div>
<svg viewBox="0 0 24 24" style="left:34.75px;top:261.69px;width:22.5px;height:22.5px;fill:#1a1a1a"><path d="M7 10l5 5 5-5z"/></svg>
<div class="jl" style="left:64.89999999999998px;top:266.44px"><span class="k">account_id</span><span class="s">:</span><span class="n">079571927413</span>,</div>
<svg viewBox="0 0 24 24" style="left:34.75px;top:288.83px;width:22.5px;height:22.5px;fill:#1a1a1a"><path d="M7 10l5 5 5-5z"/></svg>
<div class="jl" style="left:64.89999999999998px;top:293.58px"><span class="k">count</span><span class="s">:</span><span class="n">1</span>,</div>
<svg viewBox="0 0 24 24" style="left:34.75px;top:315.97px;width:22.5px;height:22.5px;fill:#1a1a1a"><path d="M7 10l5 5 5-5z"/></svg>
<div class="jl" style="left:64.89999999999998px;top:320.72px"><span class="k">max</span><span class="s">:</span><span class="n">44</span>,</div>
<svg viewBox="0 0 24 24" style="left:34.75px;top:343.11px;width:22.5px;height:22.5px;fill:#1a1a1a"><path d="M7 10l5 5 5-5z"/></svg>
<div class="jl" style="left:64.89999999999998px;top:347.86px"><span class="k">metric_dimensions</span><span class="s">:</span><span class="g"></span>,</div>
<svg viewBox="0 0 24 24" style="left:34.75px;top:370.25px;width:22.5px;height:22.5px;fill:#1a1a1a"><path d="M7 10l5 5 5-5z"/></svg>
<div class="jl" style="left:64.89999999999998px;top:375.00px"><span class="k">metric_name</span><span class="s">:</span><span class="g">OutputTokenCount</span>,</div>
<svg viewBox="0 0 24 24" style="left:34.75px;top:397.39px;width:22.5px;height:22.5px;fill:#1a1a1a"><path d="M7 10l5 5 5-5z"/></svg>
<div class="jl" style="left:64.89999999999998px;top:402.14px"><span class="k">metric_stream_name</span><span class="s">:</span><span class="g">bedrock_metric</span>,</div>
<svg viewBox="0 0 24 24" style="left:34.75px;top:424.53px;width:22.5px;height:22.5px;fill:#1a1a1a"><path d="M7 10l5 5 5-5z"/></svg>
<div class="jl" style="left:64.89999999999998px;top:429.28px"><span class="k">min</span><span class="s">:</span><span class="n">44</span>,</div>
<svg viewBox="0 0 24 24" style="left:34.75px;top:451.67px;width:22.5px;height:22.5px;fill:#1a1a1a"><path d="M7 10l5 5 5-5z"/></svg>
<div class="jl" style="left:64.89999999999998px;top:456.42px"><span class="k">namespace</span><span class="s">:</span><span class="g">AWS/Bedrock</span>,</div>
<svg viewBox="0 0 24 24" style="left:34.75px;top:478.81px;width:22.5px;height:22.5px;fill:#1a1a1a"><path d="M7 10l5 5 5-5z"/></svg>
<div class="jl" style="left:64.89999999999998px;top:483.56px"><span class="k">region</span><span class="s">:</span><span class="g">us-east-1</span>,</div>
<svg viewBox="0 0 24 24" style="left:34.75px;top:505.95px;width:22.5px;height:22.5px;fill:#1a1a1a"><path d="M7 10l5 5 5-5z"/></svg>
<div class="jl" style="left:64.89999999999998px;top:510.70px"><span class="k">sum</span><span class="s">:</span><span class="n">44</span>,</div>
<svg viewBox="0 0 24 24" style="left:34.75px;top:533.09px;width:22.5px;height:22.5px;fill:#1a1a1a"><path d="M7 10l5 5 5-5z"/></svg>
<div class="jl" style="left:64.89999999999998px;top:537.84px"><span class="k">unit</span><span class="s">:</span><span class="g">{Count}</span></div>
<div class="t" style="left:21.60px;top:565.60px;font-size:15.88px;font-weight:400;letter-spacing:0.000px;color:#222;font-family:'Liberation Mono',monospace;">}</div>
<div class="abs" style="left:0;top:1019.6px;width:1400px;height:1.2px;background:#e2e2e2"></div>
<div class="abs" style="left:22px;top:1045.2px;width:134.2px;height:47px;border-radius:5px;background:#e7ecf3"></div>
<svg viewBox="0 0 24 24" style="left:37.90px;top:1058.50px;width:21px;height:21px;fill:#5a5a5a"><path d="M15.41 7.41L14 6l-6 6 6 6 1.41-1.41L10.83 12z"/></svg>
<div class="t" id="prev" style="left:74.20px;top:1060.60px;font-size:17.3px;font-weight:400;letter-spacing:-0.199px;color:#7c7c7c;">Previous</div>
<div class="t" id="noe" style="left:488.70px;top:1060.50px;font-size:17.8px;font-weight:700;letter-spacing:0.132px;color:#1b1b1b;">Number of events:</div>
<div class="abs" style="left:669.2px;top:1042.5px;width:85px;height:45.6px;border:1.2px solid #e0e0e0;border-radius:7px;background:#fff;box-shadow:0 1.5px 1.5px rgba(0,0,0,.25)"></div>
<div class="t" style="left:686.30px;top:1059.50px;font-size:15.7px;font-weight:400;letter-spacing:0.675px;color:#222;">10</div>
<svg viewBox="0 0 24 24" style="left:707.20px;top:1051.80px;width:29px;height:29px;fill:#6c6c6c"><path d="M7 10l5 5 5-5z"/></svg>
<div class="abs" style="left:765.5px;top:1042px;width:146px;height:47px;border-radius:5px;background:#dce3ea"></div>
<div class="t" id="sa" style="left:781.50px;top:1057.30px;font-size:17.3px;font-weight:400;letter-spacing:-0.114px;color:#2c2c2c;">Search Around</div>
<div class="abs" style="left:1153px;top:1045.3px;width:118.6px;height:47.1px;border-radius:5px;background:#dce3ea"></div>
<div class="t" id="next" style="left:1174.90px;top:1060.50px;font-size:17.3px;font-weight:400;letter-spacing:0.456px;color:#2c2c2c;">Next</div>
<svg viewBox="0 0 24 24" style="left:1227.80px;top:1058.40px;width:22px;height:22px;fill:#222"><path d="M10 6L8.59 7.41 13.17 12l-4.58 4.59L10 18l6-6z"/></svg>
</div>
</body>
</html>
